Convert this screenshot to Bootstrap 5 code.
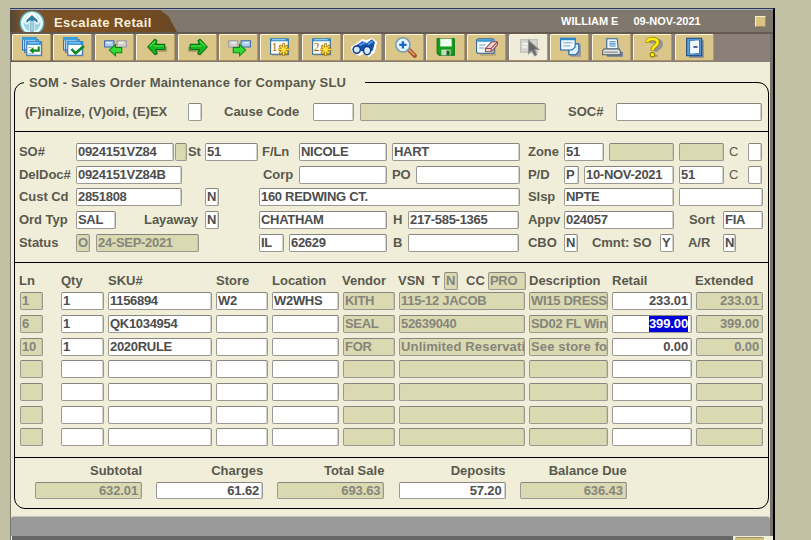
<!DOCTYPE html>
<html lang="en">
<head>
<meta charset="utf-8">
<meta name="viewport" content="width=device-width, initial-scale=1">
<title>Escalate Retail</title>
<link href="https://cdn.jsdelivr.net/npm/bootstrap@5.3.0/dist/css/bootstrap.min.css" rel="stylesheet">
<style>
body{background:#c1c0a3;font:bold 13px/18px "Liberation Sans",Arial,sans-serif;color:#59594f;width:811px;height:540px;overflow:hidden}
.win{width:765px;height:532px;margin:8px 0 0 10px;background:#f0eed8;border-top:1px solid #303a5c;border-right:2px solid #000}
.win-body{height:507px;border-left:1px solid #77756a;border-right:3px solid #77736a}
.titlebar{height:25px;background:#80776c;border-top:1px solid #a5a9b8;border-bottom:2px solid #655a52;color:#fff;font-size:11px}
.brand{width:167px;height:22px;background:linear-gradient(90deg,#51473a 0,#79512a 12px,#7a4f22 60%,#684724);clip-path:polygon(0 0,90% 0,95% 30%,100% 100%,0 100%);color:#f5efd9;font-size:13px;letter-spacing:.4px;gap:8px;padding:1px 0 0 8px}
.brand svg{width:28px;height:22px}
.brand span{padding-top:2px}
.user{margin-left:384px;white-space:pre}
.stamp{margin-left:15px}
.winbtn{width:11px;height:11px;background:#d9c483;border:1px solid #f6edcd;border-right-color:#a58e59;border-bottom-color:#a58e59;margin-left:54px}
.tools{height:28px;gap:2.42px;padding:0 0 0 1px;background:linear-gradient(90deg,#5f554e,#857a72 10%,#8a8079)}
.tool{width:39px;height:27px;padding:0;background:#dbc68a;border:1px solid #fff6d8;border-right:1px solid #b29c66;border-bottom:1px solid #a48f5e;border-radius:2px;line-height:0}
.tool.dim{background:#efedda}
.tool svg{width:27px;height:23px;display:block;margin:0 auto 0 6px}
.frame-box{width:755px;height:427px;margin:20px 0 0 3px;border:1px solid #000;border-radius:11px}
.head-line{height:20px;margin:-10px 0 0 9px;padding-left:5px;width:341px;background:#f0eed8;line-height:20px;letter-spacing:.16px}
.rowx{display:grid;height:23px;white-space:nowrap}
.h22{height:22px}
.rowx>span,.tot>span{line-height:18px}
.lab{letter-spacing:-.05px}
.f,.r{display:block;height:18px;background:#fff;border:1px solid #9a9a92;border-top-color:#85857d;border-radius:2px;padding:0 2px 0 1px;line-height:16px!important;overflow:hidden;letter-spacing:-.3px;color:#4d4d4d;box-shadow:inset -1px 0 #cfcfca;white-space:nowrap}
.r{background:#dbd9b2;color:#85857a;box-shadow:inset -1px 0 #c6c5a9}
.mx{letter-spacing:.15px}
.num{text-align:right;letter-spacing:-.12px;padding-right:3px}
.num mark{display:inline-block;background:#0000d8;color:#fff;padding:0;height:16px}
.sec{border-bottom:1px solid #000}
.s1{height:39px;padding:10px 0 0 10px}
.s2{height:131px;padding:11px 0 0 4px}
.s3{height:195px;padding:9px 0 0 4px}
.a{grid-template-columns:163px 14px 22px 89px 41px 6px 186px 22px 48px 146px}
.b1{grid-template-columns:57px 98px 1px 12px 1px 17px 53px 4px 37px 88px 5px 128px 8px 36px 40px 5px 65px 5px 45px 5px 19px 14px}
.b2{grid-template-columns:57px 106px 81px 36px 88px 5px 24px 104px 8px 36px 15px 5px 90px 5px 45px 5px 19px 14px}
.b3{grid-template-columns:57px 106px 23px 14px 40px 261px 8px 36px 110px 5px 84px}
.b4{grid-template-columns:57px 40px 28px 61px 14px 40px 128px 6px 15px 111px 9px 36px 110px 15px 34px 40px}
.b5{grid-template-columns:57px 14px 6px 103px 60px 25px 5px 98px 6px 15px 111px 9px 36px 14px 14px 68px 14px 14px 35px 13px}
.ch{grid-template-columns:42px 47px 108px 56px 70px 56px 34px 12px 14px 8px 22px 38px 3px 83px 83px 68px;height:20px}
.ch>span{line-height:18px}
.grid-lines{display:grid;grid-template-columns:37px 43px 104px 52px 67px 52px 126px 79px 80px 67px;column-gap:4px;grid-template-rows:23px 23px 22px 23px 23px 22px 23px;margin-left:1px}
.grid-lines .ln{width:23px}
.tot{padding:4px 0 0 20px;gap:14.2px}
.tot>div{width:107px;text-align:right}
.tot .num{margin-top:2px;height:17px;line-height:15px!important}
.footer-bars{margin-top:7px}
.status1{height:20px;background:#999;border-top:1px solid #c4c4bd;border-radius:3px 3px 0 0}
.status2{height:5px;margin-left:1px;background:#666;padding-left:721px}
.peek{width:40px;height:5px;background:#f0eed8;padding:1px 9px 0 2px}
.peek>span{display:block;height:4px;background:#d0bd7f;border-top:1px solid #9f9062;border-radius:2px 2px 0 0}
</style>
<script src="https://cdn.jsdelivr.net/npm/bootstrap@5.3.0/dist/js/bootstrap.bundle.min.js"></script>
</head>
<body>
<svg class="d-none">
<symbol id="wins" viewBox="0 0 26 22"><path d="M6 5h17v15H7z" fill="#8b7d56" opacity=".35"/><path d="M3.500 1.500h13v12h-13zM5.500 3.500h13v12h-13z" fill="#d9f0ff" stroke="#2465ae"/><path d="M3 1h14v3H3z" fill="#3da1e0"/><path d="M7.500 5.500h14v13h-14z" fill="#fff" stroke="#2b6cb5"/><path d="M7 5h15v3.500H7z" fill="#2f92d8"/><path d="M8.500 6.500h11" stroke="#9fe0ff"/></symbol>
<symbol id="lr" viewBox="0 0 26 22"><path d="M2.500 4.500h9v6h-9z" fill="#a9cdf0" stroke="#3d6aa8"/><path d="M14.500 4.500h9v6h-9z" fill="#d4d0ce" stroke="#9d98a0"/><path d="M4 6.500h5M16 6.500h5" stroke="#fff"/></symbol>
<symbol id="arw" viewBox="0 0 26 22"><path d="M7 13l7-7v4h9v5h-9v4z" fill="#6f7442" opacity=".6"/><path d="M4.500 10.500l7-7.500 2 1.500-1.500 3.500H21v5h-9l1.500 3.500-2 1.500z" fill="#14b51e" stroke="#087012" stroke-linejoin="round"/><path d="M6.500 10l5-5M10 9.500h10" stroke="#5de94f"/></symbol>
<symbol id="cal" viewBox="0 0 26 22"><path d="M4 5h17v14H5z" fill="#8b7d56" opacity=".4"/><path d="M3.500 3.500h17v14h-17z" fill="#fffef5" stroke="#2b6599"/><path d="M3 2h18v3H3z" fill="#2f86c2"/><path d="M5 3.500h13" stroke="#a8dcf5"/><path d="M16 7v12M11 13h10.500M12 9l8 8M20 9l-8 8" stroke="#9a6500" stroke-width="2.600"/><path d="M16 7.500v11M11 13h10.500M12.500 9.500l7 7M19.500 9.500l-7 7" stroke="#ffe246" stroke-width="1.500"/></symbol>
</svg>
<main class="win">
 <header class="titlebar d-flex align-items-center">
  <div class="brand d-flex align-items-center">
   <svg viewBox="0 0 28 22"><circle cx="14" cy="12" r="12.500" fill="#58a6b2"/><circle cx="14" cy="12" r="11" fill="#e2fbff"/><circle cx="14" cy="12" r="8.500" fill="#9bd3df"/><path d="M14 22V5M7 12l7-8 7 8" fill="none" stroke="#fff" stroke-width="5"/><path d="M12.500 22V9l-4 3V9l5.500-5 5.500 5v3l-4-3v13z" fill="#2f7fa5"/><path d="M14 22V10" stroke="#b9edf8" stroke-width="1.500"/></svg>
   <span>Escalate Retail</span>
  </div>
  <span class="user">WILLIAM E</span><span class="stamp">09-NOV-2021</span>
  <span class="winbtn"></span>
 </header>
 <div class="win-body">
  <nav class="tools d-flex">
   <button class="btn tool"><svg viewBox="0 0 26 22"><use href="#wins"/><path d="M19 10v4h-6" fill="none" stroke="#0b8a20" stroke-width="2"/><path d="M10 14l4-3.500v7z" fill="#0b8a20"/><path d="M9 11h3M9 17h3" stroke="#8fb4d0"/></svg></button>
   <button class="btn tool"><svg viewBox="0 0 26 22"><use href="#wins"/><path d="M11 12.500l4 4 8-7" fill="none" stroke="#078a22" stroke-width="2.500"/></svg></button>
   <button class="btn tool"><svg viewBox="0 0 26 22"><use href="#lr"/><path d="M7 13.500l6-5.500v3h6v5h-6v3z" fill="#35da34" stroke="#0b8516"/></svg></button>
   <button class="btn tool"><svg viewBox="0 0 26 22"><use href="#arw"/></svg></button>
   <button class="btn tool"><svg viewBox="0 0 26 22"><g transform="matrix(-1 0 0 1 26 0)"><use href="#arw"/></g></svg></button>
   <button class="btn tool"><svg viewBox="0 0 26 22"><g transform="matrix(-1 0 0 1 26 0)"><use href="#lr"/><path d="M7 13.500l6-5.500v3h6v5h-6v3z" fill="#35da34" stroke="#0b8516"/></g></svg></button>
   <button class="btn tool"><svg viewBox="0 0 26 22"><use href="#cal"/><text x="4.500" y="14.500" font-size="11" font-weight="400" font-family="Liberation Serif" fill="#a35c20">1</text></svg></button>
   <button class="btn tool"><svg viewBox="0 0 26 22"><use href="#cal"/><text x="4.500" y="14.500" font-size="11" font-weight="400" font-family="Liberation Serif" fill="#a35c20">2</text></svg></button>
   <button class="btn tool"><svg viewBox="0 0 26 22"><path d="M2 11l10-7 4 1 5-2 4 3-2 9-5 4-5-3-4 2-6-3z" fill="#fff" stroke="#fff" stroke-width="2"/><path d="M3 11l9-6 4 2 5-4 3 3-2 8-8 1-5-1z" fill="#164ea8"/><path d="M9 9l6-3M17 8l5-3" stroke="#4d97e9" stroke-width="2"/><ellipse cx="6.500" cy="13" rx="3.500" ry="3.500" fill="#d3ecfb" stroke="#153e83" stroke-width="1.500"/><ellipse cx="16.500" cy="14" rx="3.500" ry="4" fill="#d3ecfb" stroke="#153e83" stroke-width="1.500"/></svg></button>
   <button class="btn tool"><svg viewBox="0 0 26 22"><path d="M16 13l6 6" stroke="#9b4e27" stroke-width="4" stroke-linecap="round"/><path d="M16 13l6 5.500" stroke="#eba579" stroke-width="1.500"/><circle cx="10.500" cy="8.500" r="6.800" fill="#e3f5ff" stroke="#7a9cb6" stroke-width="1.500"/><path d="M10.500 5v7M7 8.500h7" stroke="#1767c9" stroke-width="2.200"/></svg></button>
   <button class="btn tool"><svg viewBox="0 0 26 22"><path d="M4 2.500h16.500v16H6l-2-2z" fill="#12a01c" stroke="#07720f"/><path d="M7 2.500h11v7.500H7z" fill="#f4fff1"/><path d="M8 13h9v5.500H8z" fill="#c8d9c3"/><path d="M13 14h3v4.500h-3z" fill="#116b17"/></svg></button>
   <button class="btn tool"><svg viewBox="0 0 26 22"><path d="M4 5h17v14H6z" fill="#827852" opacity=".4"/><rect x="2.500" y="2.500" width="17" height="14" rx="2" fill="#f3fbff" stroke="#2a6299"/><path d="M3 3h16v2.500h-16z" fill="#3b9ad1"/><path d="M5 8.500h6M5 11.500h5" stroke="#8099ac"/><path d="M11 12l6-6.500h5.500v3L17 15h-6z" fill="#f6cfcd" stroke="#904a54"/><path d="M11 12h5.500l6-6.500M16.500 12v3" fill="none" stroke="#904a54"/></svg></button>
   <button class="btn tool dim"><svg viewBox="0 0 26 22"><rect x="4.500" y="3.500" width="16" height="12" fill="#d8d8d2" stroke="#b8b8b4"/><path d="M6 7.500h6M6 10.500h5" stroke="#fff"/><path d="M12 4v13l3-3 3 5 2-1-2-5h4z" fill="#676767" stroke="#929292"/></svg></button>
   <button class="btn tool"><svg viewBox="0 0 26 22"><path d="M7 8h16v12H13z" fill="#68759a" opacity=".6"/><path d="M11.500 7.500h9.500v7l-3 3.500h-6.500z" fill="#d9f2ff" stroke="#1d5fa8"/><path d="M3.500 2.500h14v8l-3 3h-11z" fill="#f0fbff" stroke="#1d5fa8"/><path d="M3 1.500h15v2.500H3z" fill="#2b86cd"/><path d="M6 6.500h9M6 9.500h7" stroke="#7da6c2"/></svg></button>
   <button class="btn tool"><svg viewBox="0 0 26 22"><path d="M6 15h17v5H8z" fill="#3f5d9d" opacity=".7"/><path d="M7.500 2.500h10l1 10h-11z" fill="#effaff" stroke="#285f98"/><path d="M10 5.500h6M10 7.500h6M10 9.500h6" stroke="#3a88be"/><path d="M4.500 12.500h15l1 2v3.500h-17v-3.500z" fill="#e0e0db" stroke="#535b6b"/><path d="M5 15.500h13" stroke="#7d858e"/></svg></button>
   <button class="btn tool"><svg viewBox="0 0 26 22"><path d="M11 7c1-5 11-3 9 2-1 3-5 3-5 6M15 18v2" fill="none" stroke="#68709a" stroke-width="4" opacity=".6"/><path d="M7 6.500c0-5 10-5 10-.5 0 3.500-5 3.500-5 8" fill="none" stroke="#8e7b00" stroke-width="4"/><path d="M7 6c0-4.500 10-4.500 10 0 0 3.500-5 3.500-5 7.500" fill="none" stroke="#ffec16" stroke-width="2.600"/><circle cx="12" cy="18" r="2.200" fill="#ffec16" stroke="#8e7b00"/></svg></button>
   <button class="btn tool"><svg viewBox="0 0 26 22"><path d="M7 4h14v17H7z" fill="#4f6a9f" opacity=".6"/><path d="M4.500 2h14.500v17h-14.500z" fill="#5ea3d8" stroke="#17437c"/><path d="M7.500 4h9.500v13H7.500z" fill="#fff" stroke="#286cb2"/><path d="M8 5l8-1v12l-8 1z" fill="#eef8fd"/><path d="M11 10.500h4" stroke="#17437c" stroke-width="1.500"/></svg></button>
  </nav>
  <section class="frame-box">
   <div class="head-line text-nowrap">SOM - Sales Order Maintenance for Company SLU</div>
   <div class="sec s1"><div class="rowx a"><span>(F)inalize, (V)oid, (E)EX</span><span class="f"></span><span></span><span>Cause Code</span><span class="f"></span><span></span><span class="r"></span><span></span><span>SOC#</span><span class="f"></span></div></div>
   <div class="sec s2 lab">
    <div class="rowx b1"><span>SO#</span><span class="f">0924151VZ84</span><span></span><span class="r"></span><span></span><span>St</span><span class="f">51</span><span></span><span>F/Ln</span><span class="f">NICOLE</span><span></span><span class="f">HART</span><span></span><span>Zone</span><span class="f">51</span><span></span><span class="r"></span><span></span><span class="r"></span><span></span><span class="fw-normal">C</span><span class="f"></span></div>
    <div class="rowx b2 h22"><span>DelDoc#</span><span class="f">0924151VZ84B</span><span></span><span>Corp</span><span class="f"></span><span></span><span>PO</span><span class="f"></span><span></span><span>P/D</span><span class="f">P</span><span></span><span class="f">10-NOV-2021</span><span></span><span class="f">51</span><span></span><span class="fw-normal">C</span><span class="f"></span></div>
    <div class="rowx b3"><span>Cust Cd</span><span class="f">2851808</span><span></span><span class="f">N</span><span></span><span class="f">160 REDWING CT.</span><span></span><span>Slsp</span><span class="f">NPTE</span><span></span><span class="f"></span></div>
    <div class="rowx b4"><span>Ord Typ</span><span class="f">SAL</span><span></span><span>Layaway</span><span class="f">N</span><span></span><span class="f">CHATHAM</span><span></span><span>H</span><span class="f">217-585-1365</span><span></span><span>Appv</span><span class="f">024057</span><span></span><span>Sort</span><span class="f">FIA</span></div>
    <div class="rowx b5"><span>Status</span><span class="r">O</span><span></span><span class="r">24-SEP-2021</span><span></span><span class="f">IL</span><span></span><span class="f">62629</span><span></span><span>B</span><span class="f"></span><span></span><span>CBO</span><span class="f">N</span><span></span><span>Cmnt: SO</span><span class="f">Y</span><span></span><span>A/R</span><span class="f">N</span></div>
   </div>
   <div class="sec s3">
    <div class="rowx ch"><span>Ln</span><span>Qty</span><span>SKU#</span><span>Store</span><span>Location</span><span>Vendor</span><span>VSN</span><span>T</span><span class="r">N</span><span></span><span>CC</span><span class="r">PRO</span><span></span><span>Description</span><span>Retail</span><span>Extended</span></div>
    <div class="grid-lines">
     <span class="r ln">1</span><span class="f">1</span><span class="f">1156894</span><span class="f">W2</span><span class="f">W2WHS</span><span class="r">KITH</span><span class="r">115-12 JACOB</span><span class="r">WI15 DRESS</span><span class="f num">233.01</span><span class="r num">233.01</span>
     <span class="r ln">6</span><span class="f">1</span><span class="f">QK1034954</span><span class="f"></span><span class="f"></span><span class="r">SEAL</span><span class="r">52639040</span><span class="r">SD02 FL Win</span><span class="f num"><mark>399.00</mark></span><span class="r num">399.00</span>
     <span class="r ln">10</span><span class="f">1</span><span class="f">2020RULE</span><span class="f"></span><span class="f"></span><span class="r">FOR</span><span class="r mx">Unlimited Reservati</span><span class="r mx">See store fo</span><span class="f num">0.00</span><span class="r num">0.00</span>
     <span class="r ln"></span><span class="f"></span><span class="f"></span><span class="f"></span><span class="f"></span><span class="r"></span><span class="r"></span><span class="r"></span><span class="f"></span><span class="r"></span>
     <span class="r ln"></span><span class="f"></span><span class="f"></span><span class="f"></span><span class="f"></span><span class="r"></span><span class="r"></span><span class="r"></span><span class="f"></span><span class="r"></span>
     <span class="r ln"></span><span class="f"></span><span class="f"></span><span class="f"></span><span class="f"></span><span class="r"></span><span class="r"></span><span class="r"></span><span class="f"></span><span class="r"></span>
     <span class="r ln"></span><span class="f"></span><span class="f"></span><span class="f"></span><span class="f"></span><span class="r"></span><span class="r"></span><span class="r"></span><span class="f"></span><span class="r"></span>
    </div>
   </div>
   <div class="tot d-flex">
    <div>Subtotal<span class="r num">632.01</span></div>
    <div>Charges<span class="f num">61.62</span></div>
    <div>Total Sale<span class="r num">693.63</span></div>
    <div>Deposits<span class="f num">57.20</span></div>
    <div>Balance Due<span class="r num">636.43</span></div>
   </div>
  </section>
  <footer class="footer-bars">
   <div class="status1"></div>
   <div class="status2"><div class="peek"><span></span></div></div>
  </footer>
 </div>
</main>
</body>
</html>
